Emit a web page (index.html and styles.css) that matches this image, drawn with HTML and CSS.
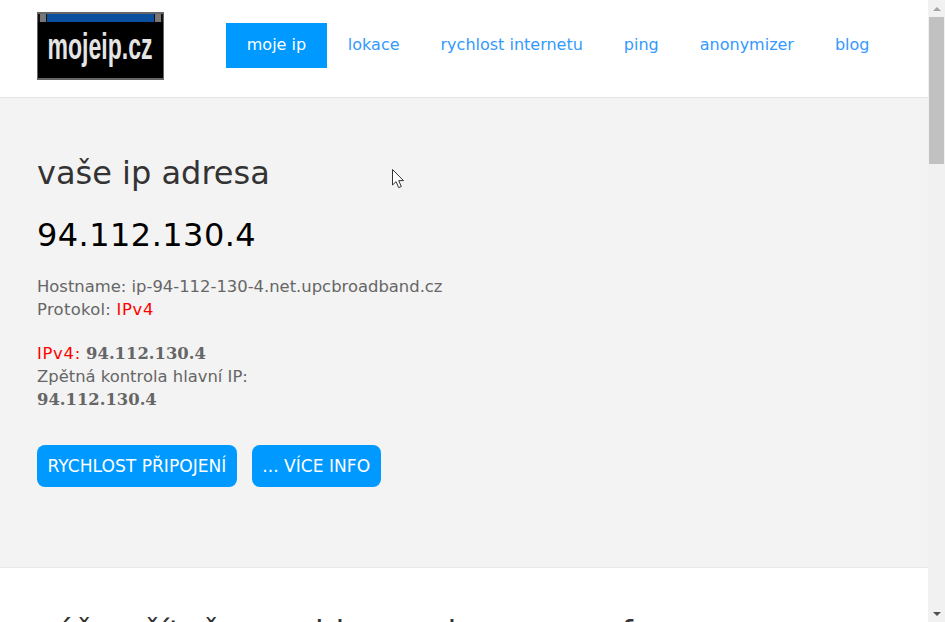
FILE: index.html
```html
<!DOCTYPE html>
<html lang="cs">
<head>
    <meta charset="UTF-8">
    <title>mojeip.cz</title>
    <link rel="stylesheet" href="styles.css">
</head>
<body>
    <div class="page">
        <header class="topbar">
            <a href="#" class="logo">
                <span class="logo-title">
                    <span class="logo-box"></span>
                    <span class="logo-bar"></span>
                    <span class="logo-box"></span>
                </span>
                <span class="logo-text">mojeip.cz</span>
            </a>
            <nav class="menu">
                <a href="#" class="menu-item active">moje ip</a>
                <a href="#" class="menu-item">lokace</a>
                <a href="#" class="menu-item">rychlost internetu</a>
                <a href="#" class="menu-item">ping</a>
                <a href="#" class="menu-item">anonymizer</a>
                <a href="#" class="menu-item">blog</a>
            </nav>
        </header>

        <section class="ip-section">
            <h2 class="section-title">vaše ip adresa</h2>
            <div class="ip-main">94.112.130.4</div>
            <p class="info">
                Hostname: ip-94-112-130-4.net.upcbroadband.cz<br>
                <span class="label">Protokol:</span> <span class="red">IPv4</span>
            </p>
            <p class="info">
                <span class="red">IPv4:</span> <b>94.112.130.4</b><br>
                Zpětná kontrola hlavní IP:<br>
                <b>94.112.130.4</b>
            </p>
            <div class="buttons">
                <a href="#" class="btn">RYCHLOST PŘIPOJENÍ</a>
                <a href="#" class="btn">... VÍCE INFO</a>
            </div>
            <svg class="cursor" width="14" height="22" viewBox="0 0 14 22">
                <path d="M1.5 1.5V17l3.6-3.4 2.6 6 2.6-1.1-2.6-5.9h4.8z" fill="#fff" stroke="#333" stroke-width="1"/>
            </svg>
        </section>

        <section class="next-section">
            <h2 class="section-title">váš počítač se nahlas vyvine pro profesory</h2>
        </section>
    </div>

    <div class="scrollbar">
        <span class="arrow arrow-up"></span>
        <div class="thumb"></div>
        <span class="arrow arrow-down"></span>
    </div>
</body>
</html>
```

FILE: styles.css
```css
* {
    margin: 0;
    padding: 0;
    box-sizing: border-box;
}

html, body {
    height: 100%;
    overflow: hidden;
}

body {
    display: flex;
    font-family: 'DejaVu Sans', Verdana, sans-serif;
    background: white;
    color: #666;
}

a {
    text-decoration: none;
}

.page {
    flex: 1;
    min-width: 0;
    height: 622px;
    overflow: hidden;
}

.topbar {
    display: flex;
    align-items: center;
    height: 98px;
    padding: 0 37px;
    border-bottom: 1px solid #e6e6e6;
    background: white;
}

.logo {
    flex: none;
    display: flex;
    flex-direction: column;
    width: 127px;
    height: 68px;
    margin-top: -5px;
    border: 1px solid #666;
    border-width: 2px 1px;
    background: black;
    overflow: hidden;
}

.logo-title {
    display: flex;
    gap: 1px;
    height: 8px;
    padding: 0 2px;
    background: #111;
}

.logo-box {
    width: 6px;
    background: #777;
}

.logo-bar {
    flex: 1;
    background: #0b4f9e;
}

.logo-text {
    align-self: center;
    line-height: 50px;
    color: #e4e4e4;
    font-family: 'Liberation Sans', sans-serif;
    font-size: 36px;
    font-weight: bold;
    white-space: nowrap;
    transform: scaleX(0.64);
}

.menu {
    display: flex;
    align-items: center;
    margin-left: 62px;
    margin-top: -6px;
    white-space: nowrap;
}

.menu-item {
    padding: 0 20.5px 2px;
    line-height: 43px;
    font-size: 16px;
    color: #3399ff;
}

.menu-item.active {
    padding: 0 20.75px 2px;
    margin-right: 0.5px;
    background: #0099ff;
    color: white;
}

.ip-section {
    position: relative;
    height: 470px;
    padding: 55px 37px 0;
    background: #f3f3f3;
    border-bottom: 1px solid #e8e8e8;
}

.section-title {
    font-size: 32px;
    font-weight: normal;
    line-height: 40px;
    color: #333;
    white-space: nowrap;
}

.ip-main {
    margin-top: 22px;
    font-size: 32px;
    letter-spacing: 0.45px;
    line-height: 40px;
    color: black;
}

.info {
    margin-top: 20px;
    font-size: 16.4px;
    line-height: 23px;
}

.info + .info {
    margin-top: 21px;
}

.info b {
    font-family: 'DejaVu Serif', serif;
}

.label {
    letter-spacing: 0.3px;
}

.red {
    color: #ff0000;
    letter-spacing: 0.7px;
}

.buttons {
    display: flex;
    gap: 15px;
    margin-top: 34px;
}

.btn {
    padding: 0 10.5px;
    line-height: 42px;
    border-radius: 8px;
    background: #0099ff;
    color: white;
    font-size: 17.1px;
}

.cursor {
    position: absolute;
    left: 391px;
    top: 70px;
}

.next-section {
    padding: 44px 37px 0;
    background: white;
}

.scrollbar {
    flex: none;
    display: flex;
    flex-direction: column;
    width: 17px;
    height: 622px;
    background: #f1f1f1;
}

.arrow {
    flex: none;
    height: 17px;
    display: flex;
    align-items: center;
    justify-content: center;
}

.arrow::before {
    content: "";
    border-left: 4px solid transparent;
    border-right: 4px solid transparent;
}

.arrow-up::before {
    border-bottom: 4px solid #a3a3a3;
}

.arrow-down {
    margin-top: auto;
}

.arrow-down::before {
    border-top: 4px solid #505050;
}

.thumb {
    height: 147px;
    margin: 0 1px;
    background: #c1c1c1;
}
```
